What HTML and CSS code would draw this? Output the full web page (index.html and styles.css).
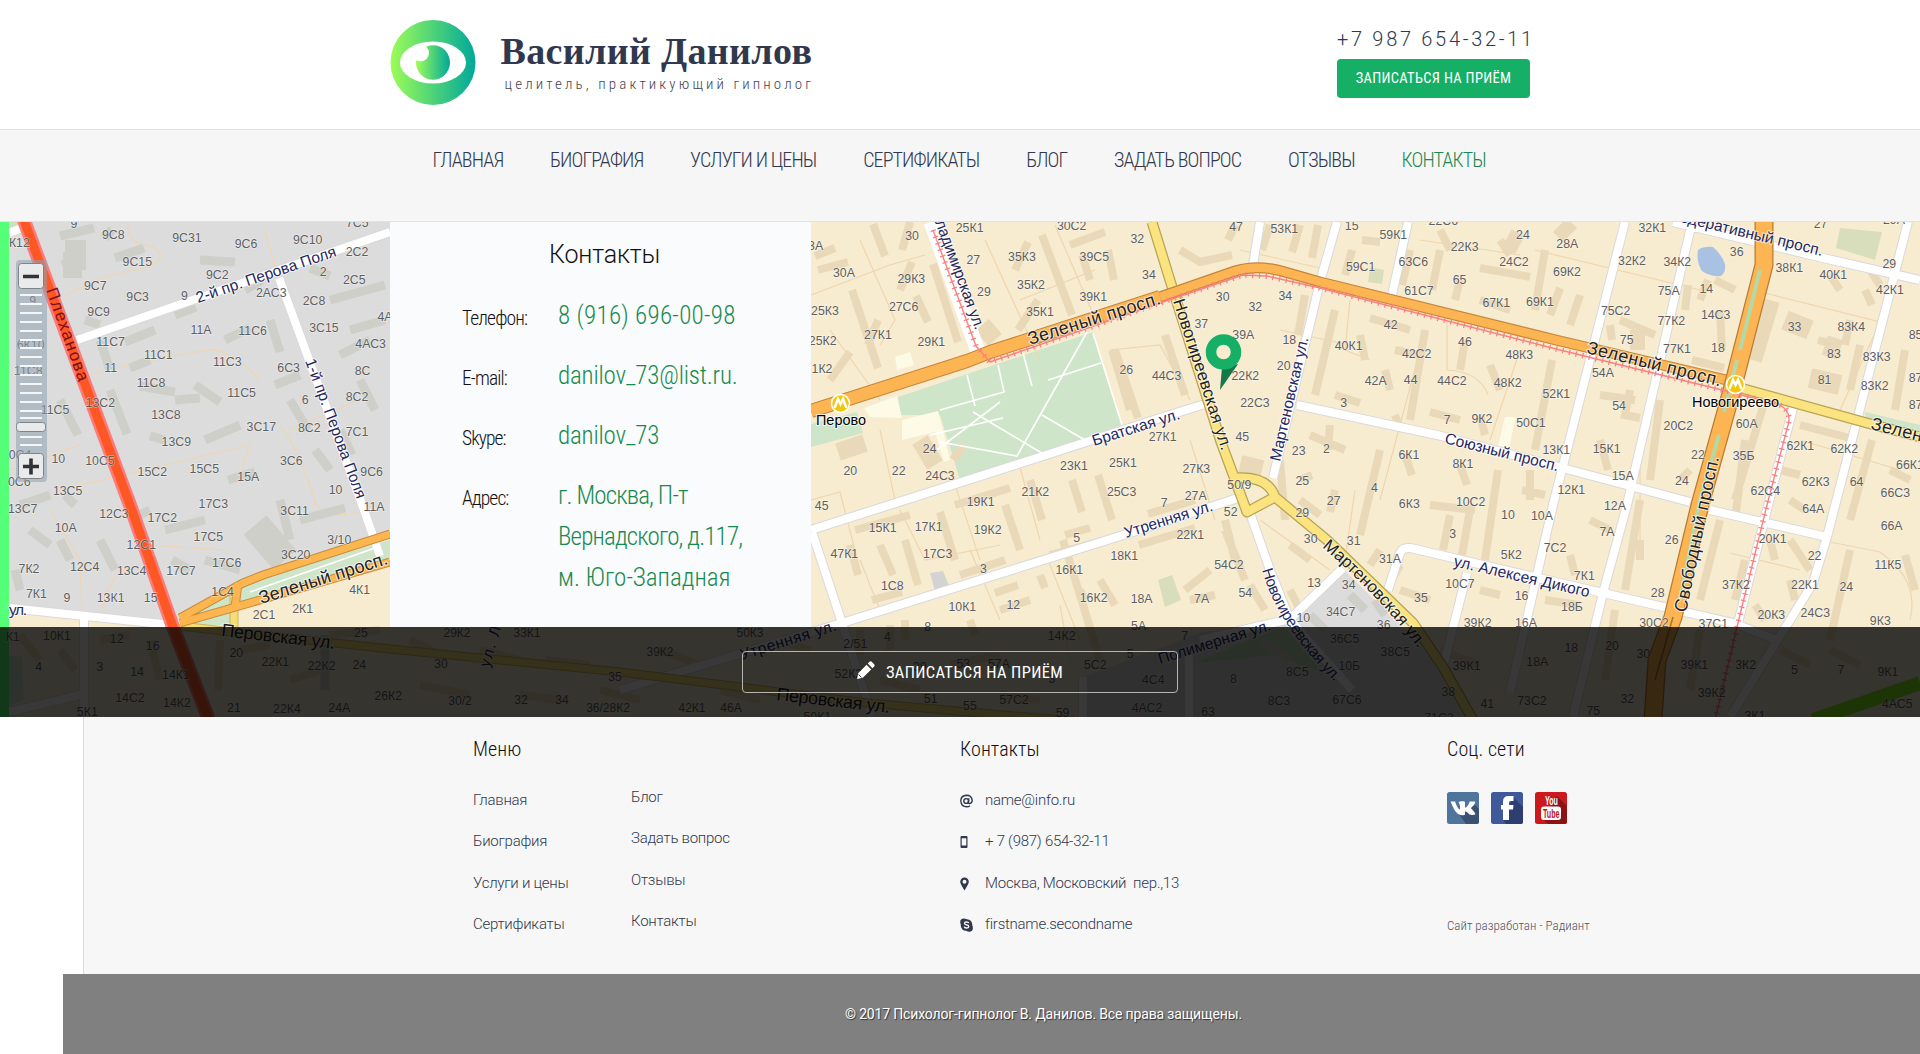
FILE: index.html
```html
<!DOCTYPE html>
<html lang="ru">
<head>
<meta charset="utf-8">
<title>Контакты — Василий Данилов</title>
<link rel="stylesheet" href="styles.css">
</head>
<body>
<header class="header">
  <div class="brand">
    <svg class="logo" viewBox="0 0 85 85">
      <defs><linearGradient id="lg" x1="0" x2="1" y1="0" y2="0"><stop offset="0" stop-color="#9dfd57"/><stop offset="1" stop-color="#00a89b"/></linearGradient></defs>
      <circle cx="42.5" cy="42.5" r="42.5" fill="url(#lg)"/>
      <ellipse cx="42.5" cy="42.5" rx="33" ry="21" fill="#fff"/>
      <ellipse cx="42.5" cy="42.5" rx="17" ry="17.3" fill="url(#lg)"/>
      <circle cx="30" cy="33" r="8.5" fill="#fff"/>
    </svg>
    <div class="names"><div class="title">Василий Данилов</div><div class="subtitle">целитель, практикующий гипнолог</div></div>
  </div>
  <div class="call"><div class="phone">+7 987 654-32-11</div><a class="book">ЗАПИСАТЬСЯ НА ПРИЁМ</a></div>
</header>
<nav class="nav">
  <a>ГЛАВНАЯ</a><a>БИОГРАФИЯ</a><a>УСЛУГИ И ЦЕНЫ</a><a>СЕРТИФИКАТЫ</a><a>БЛОГ</a><a>ЗАДАТЬ ВОПРОС</a><a>ОТЗЫВЫ</a><a class="active">КОНТАКТЫ</a>
</nav>
<section class="place">
<svg class="map" viewBox="0 222 1920 495">
  <rect x="0" y="222" width="1920" height="495" fill="#f7ecd0"/>
  <path d="M0 222H390V534L263 575L180 618L173 627L0 610Z" fill="#dcdcdc"/>
  <path d="M9 222H22L9 232Z" fill="#c9e2ba"/>
  <!-- parks, yards and water -->
  <path d="M898 397L1093 332L1122 425L960 480L940 415L900 415ZM811 424L857 412L863 433L811 447ZM180 618L240 584L390 540V558L233 605L230 625L184 625ZM1865 412L1920 425V438L1867 424ZM9 655L22 657L24 700L9 705Z" fill="#cfe5c9"/>
  <path d="M1840 228L1882 232L1875 260L1836 248ZM1158 580L1172 575L1181 600L1165 607ZM1370 267L1384 270L1382 284L1368 282Z" fill="#d8debb"/>
  <path d="M1083 717V677L1200 633L1290 620L1342 568L1443 667L1473 717Z" fill="#dcdcdc"/>
  <path d="M1195 663L1237 645L1284 627L1322 672L1275 655Z" fill="#bcdab5"/>
  <path d="M1698 250Q1704 246 1713 247Q1722 255 1725 264Q1726 273 1721 276Q1710 277 1702 271Q1696 262 1698 250Z" fill="#a9c1e2"/>
  <path d="M895 357L910 352L914 365L897 370ZM864 408L897 396L902 418L870 417ZM902 420L938 411L950 460L944 462L935 432L902 440ZM1505 417L1516 417L1509 448L1498 446Z" fill="#fdfae6"/>
  <path d="M930 573L943 571L950 588L935 591Z" fill="#d3d3d3"/>
  <!-- footpaths and lot outlines -->
  <g fill="none" stroke="#f0d5ae" stroke-width="1.2">
    <path d="M127 222C130 245 138 243 155 248C170 260 150 268 130 271S90 283 60 298M265 232L278 275M75 377L165 358Q192 352 210 350T260 380M60 490L250 445L240 475M50 510L80 560L82 612M9 470L80 445M280 425Q300 450 316 505Q330 520 360 512M290 430L370 395M150 545L225 550M100 620C105 580 125 560 140 570"/>
    <path d="M811 295L890 265L925 255M860 240L895 320L880 345M830 330L880 400M985 240L1040 360M1055 225L1100 330M1020 300L1095 270M1110 350L1160 345L1190 400M880 430L895 500M1018 460L1040 540M900 510L925 560L1000 545M950 470L980 560M1048 560L1080 640M811 500L840 492L855 550M1240 250L1320 268M1280 330L1350 345M1350 300L1345 350L1370 360M1420 350L1380 500M1447 320V370Q1480 372 1488 395M1355 490L1345 560M1520 350L1490 440M1535 250L1700 290M1765 293L1880 322L1840 410M1800 440L1900 470M1730 553L1800 570M1640 430V540M1820 540L1880 552Q1920 580 1910 620M1420 240L1520 255M1260 520L1330 570M1190 440L1215 520M970 550L1000 620M1060 605L1070 660M860 560L880 610"/>
  </g>
  <!-- buildings -->
  <g fill="none" stroke="#cfcfc9" stroke-width="9">
    <path d="M60 236L94 228M104 238L112 230M115 258L144 248M200 260L235 262M245 290L262 280M125 342L155 330M175 315L196 307M62 265L80 258M130 368L150 360M225 340L250 328M270 320L280 352M140 386L175 392M175 400L200 398M195 385L220 402M100 340L110 370M275 385L300 375M290 400L308 430M150 436L165 440M205 440L240 425M60 400L78 435M110 390L127 434M228 480L255 472M315 450L330 470M340 430L352 455M65 495L75 505M20 505L50 495M30 530L50 545M130 520L150 510M165 530L205 520M300 520L345 508M280 500L290 540M85 320L100 325M310 268L330 276M330 300L385 285M350 330L385 320M340 355L370 340M360 380L375 410M172 560L190 570M205 560L240 570M15 570L20 590M100 540L115 570M60 540L70 560"/>
    <path d="M63 265H82" stroke-width="26"/><path d="M65 255H86" stroke-width="30"/><path d="M255 525L285 560" stroke-width="30"/>
    <path d="M325 635L325 690M1260 640L1290 660M1350 595L1365 610M1375 600L1385 615M1310 615L1325 630"/>
  </g>
  <g fill="none" stroke="#e9d9b8" stroke-width="8">
    <path d="M873 224L885 256M910 222L902 250M815 256L835 248M818 270L848 262M912 262L900 290M852 290L878 368M933 264L958 342M916 296L928 322M878 320L868 345M1042 235L1072 315M1028 242L1015 270M1018 330L1038 300M1070 245L1105 232M1082 255L1090 280M1108 250L1114 280M830 380L850 352M1063 540L1100 660M1112 350L1130 410M1115 350L1138 418M1165 335L1185 395M995 472L1048 455M955 505L1010 488M855 530L910 515M940 512L955 560M1005 505L1020 550M1030 480L1042 520M1072 480L1082 512M1098 475L1112 520M960 575L1005 560M880 545L893 575M905 540L918 585M850 545L858 575M872 600L902 592M1050 555L1105 540M1065 535L1090 528M1148 514L1195 500M1139 545L1195 528M970 620L975 635M995 593L1018 585M1000 610L1030 600M1040 575L1045 588M1080 590L1085 600M1100 580L1115 605M1185 590L1210 570M1190 600L1215 595M1225 530L1245 580M1235 560L1225 520M1250 585L1265 610M1290 590L1300 610M1180 250L1200 262L1232 255M1235 225L1228 240M1270 225L1262 250M1300 225L1292 252M1318 225L1312 258M1362 240L1380 242M1352 250L1345 275M1410 250L1402 285M1440 250L1432 290M1440 230L1450 250M1480 268L1530 277M1500 240L1510 255M1545 250L1535 310M1460 280L1455 300M1480 300L1510 310M1560 288L1550 315M1580 295L1570 325M1370 318L1410 330M1335 310L1315 395M1305 295L1298 335M1335 395L1360 403M1360 335L1365 360M1395 350L1420 355M1425 330L1410 420M1385 370L1390 390M1465 340L1460 370M1490 365L1500 390M1430 412L1460 420M1480 415L1485 435M1310 435L1345 450M1330 425L1328 450M1380 450L1360 535M1405 455L1412 475M1460 465L1467 485M1395 415L1400 430M1430 505L1475 510M1450 515L1443 550M1470 510L1462 555M1498 470L1485 560M1530 470V500M1522 490L1545 495M1280 460L1285 520M1300 480L1312 475M1335 490L1330 512M1300 500L1320 515M1290 545L1310 560M1380 550L1370 565M1400 565L1392 580M1400 590L1430 600M1480 590L1500 595M1620 320L1655 335M1610 325L1612 340M1630 390L1625 415L1640 418M1600 395L1635 400M1552 360L1535 450M1600 440L1608 470M1660 400L1650 480M1715 280L1735 290M1720 310L1722 350M1692 360L1724 368M1688 285L1685 310M1700 300L1708 280M1745 440L1735 520M1765 400L1735 500M1800 425L1850 438M1860 345L1850 390M1905 350L1895 410M1870 270L1880 285M1830 275L1840 290M1818 340L1835 345M1850 320L1845 345M1865 290L1872 305M1872 440L1850 520M1890 470L1910 480M1780 470L1800 475M1790 500L1805 510M1640 500L1625 590M1720 520L1700 600M1745 560L1735 600M1770 540L1775 560M1790 540L1810 570M1790 580L1795 600M1850 550L1830 640M1905 555L1915 590M1755 605L1765 620M1545 600L1580 605M1615 610L1605 680M1700 630L1690 690M1570 555L1575 575M1590 520L1610 530M1680 480L1690 470M905 620V640M890 625V650M860 630V655M1440 650L1480 665M1780 650L1810 665M1830 650L1860 665M1640 560V540"/>
    <path d="M838 452L865 443M920 440L935 465M955 450L962 455M982 325L995 340" stroke-width="18"/>
    <path d="M1770 300L1752 360M1785 320L1810 330M1825 345L1840 350M1810 378L1840 385M1560 225L1570 235M1507 238L1520 245M1240 465L1262 470M1630 340L1645 340" stroke-width="20"/>
    <path d="M20 635L40 660M100 640L130 635M150 640L160 680M220 640L218 690M240 650L270 645M290 680L320 670M330 635L380 630M60 650L75 670M410 640L440 655M480 650L520 660M545 660L590 665M420 685L470 695M520 695L560 700M600 690L640 700M660 650L700 665M720 690L760 700M780 640L810 650M880 680L920 690M950 665L1000 655M1000 695L1040 700"/>
  </g>
  <!-- white streets -->
  <g fill="none" stroke="#d9d9dc" stroke-width="10">
    <path id="w1" d="M9 233L22 228M77 340L390 232M279 278L364 510L380 556M9 608L172 625M84 613V717M9 712L84 694"/>
    <path id="w2" d="M811 530L1043 456L1160 418L1205 404M812 532L842 623L867 700L871 717M620 690L842 623L1133 532L1238 498M1337 222L1320 282L1273 478M1260 222L1253 265M1408 222L1392 295M1297 405L1437 435L1570 470L1690 502M1710 510L1827 537M1250 513L1270 570L1290 620L1352 690M1200 640L1290 619L1343 568M1388 590L1400 553Q1403 546 1415 549L1560 583L1733 623L1777 640M1467 573L1443 667M1625 222L1553 505L1510 693M1692 222L1627 505L1603 593L1573 717M1908 222L1827 537L1813 583L1730 717M1793 408L1737 627M1673 222L1823 258L1920 280M1189 655V717M1083 677V717"/>
  </g>
  <g fill="none" stroke="#fff" stroke-width="8">
    <path d="M9 233L22 228M77 340L390 232M279 278L364 510L380 556M9 608L172 625M84 613V717M9 712L84 694"/>
    <path d="M811 530L1043 456L1160 418L1205 404M812 532L842 623L867 700L871 717M620 690L842 623L1133 532L1238 498M1337 222L1320 282L1273 478M1260 222L1253 265M1408 222L1392 295M1297 405L1437 435L1570 470L1690 502M1710 510L1827 537M1250 513L1270 570L1290 620L1352 690M1200 640L1290 619L1343 568M1388 590L1400 553Q1403 546 1415 549L1560 583L1733 623L1777 640M1467 573L1443 667M1625 222L1553 505L1510 693M1692 222L1627 505L1603 593L1573 717M1908 222L1827 537L1813 583L1730 717M1793 408L1737 627M1673 222L1823 258L1920 280M1189 655V717M1083 677V717"/>
    <path d="M931 222L979 354" stroke-width="15"/>
    <path d="M930 435L1003 418M937 450L1000 402M940 442L1017 456L1087 332M973 412L1045 455M967 375L975 406M998 365L1004 392L940 410M1023 353L1032 386M1048 380L1101 363M1042 415L1085 440M1093 333L1122 425M250 592L375 548" stroke-width="1.6"/>
  </g>
  <!-- main roads -->
  <g fill="none" stroke-linejoin="round">
    <path d="M180 626L233 632L400 650L620 672L867 703L1083 722M234 585V628" stroke="#c9b55d" stroke-width="9"/><path d="M180 626L233 632L400 650L620 672L867 703L1083 722M234 585V628" stroke="#f6dd78" stroke-width="7"/>
    <path d="M180 618L243 583L263 575L390 534M180 623L260 600L390 562M238 583L235 608" stroke="#c98c3a" stroke-width="9"/><path d="M180 618L243 583L263 575L390 534M180 623L260 600L390 562M238 583L235 608" stroke="#fdb64f" stroke-width="7"/>
    <path d="M22 215L130 505L173 627L209 720" stroke="#fb7c7c" stroke-width="14"/><path d="M22 215L130 505L173 627L209 720" stroke="#ff5724" stroke-width="9"/>
    <path d="M1152 222L1173 290L1221 442L1247 512L1275 497M1236 478Q1268 476 1275 497L1327 540L1413 623L1443 667L1473 720M1737 387L1867 423L1920 437" stroke="#b7a456" stroke-width="11"/><path d="M1152 222L1173 290L1221 442L1247 512L1275 497M1236 478Q1268 476 1275 497L1327 540L1413 623L1443 667L1473 720M1737 387L1867 423L1920 437" stroke="#fbe37f" stroke-width="8.5"/>
    <path d="M1160 297L1235 271Q1258 264 1285 272L1320 282L1560 341L1735 382" stroke="#c4863a" stroke-width="11"/><path d="M1160 297L1235 271Q1258 264 1285 272L1320 282L1560 341L1735 382" stroke="#fdb553" stroke-width="8.5"/>
    <path d="M811 411L967 361L990 352L1160 297" stroke="#c4863a" stroke-width="14"/><path d="M811 411L967 361L990 352L1160 297" stroke="#fdb553" stroke-width="12"/>
    <path d="M1764 215V265L1732 390L1700 505L1673 617L1657 660L1653 720" stroke="#b97a33" stroke-width="19"/><path d="M1764 215V265L1732 390L1700 505L1673 617L1657 660L1653 720" stroke="#fdb553" stroke-width="16.500"/>
    <path d="M1760 270L1740 350M1737 360L1724 412M1719 435L1700 500L1680 600" stroke="#b5d8a8" stroke-width="4"/><path d="M1673 617L1655 680" stroke="#a57730" stroke-width="1.5"/>
    <path d="M1813 720L1920 683" stroke="#86ef1c" stroke-width="14"/>
    <path d="M933 230L976 346L990 362L1160 303L1243 275L1267 276L1320 288L1560 350L1722 390L1780 405Q1792 412 1788 425L1767 505L1737 627L1715 720" stroke="#fb8181" stroke-width="1.4"/>
    <path d="M933 230L976 346L990 362L1160 303L1243 275L1267 276L1320 288L1560 350L1722 390L1780 405Q1792 412 1788 425L1767 505L1737 627L1715 720" stroke="#fb8181" stroke-width="5.500" stroke-dasharray="1.3 5.5"/>
  </g>
  <rect x="0" y="222" width="9" height="495" fill="#55ff78"/>
  <!-- metro stations -->
  <g fill="#f0c70b" stroke="#fff" stroke-width="1.5"><circle cx="840.5" cy="403.500" r="9"/><circle cx="1735.500" cy="384.500" r="9"/></g>
  <path id="metro" d="M834.500 408L838 399L840.500 404L843 399L846.500 408" fill="none" stroke="#fff" stroke-width="2.600"/><use href="#metro" x="895" y="-19"/>
  <g class="station"><text x="816" y="425" textLength="50" lengthAdjust="spacingAndGlyphs">Перово</text><text x="1692" y="407" textLength="87" lengthAdjust="spacingAndGlyphs">Новогиреево</text></g>
  <!-- house numbers -->
  <g class="nums">
    <g transform="translate(0 215) scale(.3333)"><text x="222" y="40">9</text><text x="340" y="71">9С8</text><text x="561" y="81">9С31</text><text x="738" y="100">9С6</text><text x="923" y="87">9С10</text><text x="1072" y="36">7С5</text><text x="58" y="96">К12</text><text x="412" y="154">9С15</text><text x="1071" y="123">2С2</text><text x="652" y="192">9С2</text><text x="970" y="183">2</text><text x="1063" y="208">2С5</text><text x="286" y="224">9С7</text><text x="413" y="257">9С3</text><text x="553" y="256">9</text><text x="814" y="247">2АС3</text><text x="942" y="270">2С8</text><text x="296" y="304">9С9</text><text x="603" y="356">11А</text><text x="758" y="361">11С6</text><text x="972" y="350">3С15</text><text x="1155" y="317">4А</text><text x="332" y="392">11С7</text><text x="1112" y="399">4АС3</text><text x="475" y="432">11С1</text><text x="682" y="452">11С3</text><text x="866" y="471">6С3</text><text x="1088" y="479">8С</text><text x="332" y="472">11</text><text x="453" y="516">11С8</text><text x="725" y="545">11С5</text><text x="916" y="567">6</text><text x="1071" y="559">8С2</text><text x="301" y="577">13С2</text><text x="165" y="597">11С5</text><text x="498" y="612">13С8</text><text x="784" y="649">3С17</text><text x="928" y="652">8С2</text><text x="1071" y="662">7С1</text><text x="529" y="694">13С9</text><text x="175" y="743">10</text><text x="300" y="751">10С5</text><text x="874" y="751">3С6</text><text x="613" y="773">15С5</text><text x="457" y="784">15С2</text><text x="745" y="798">15А</text><text x="1115" y="784">9С6</text><text x="1007" y="837">10</text><text x="203" y="841">13С5</text><text x="98" y="271">9</text><text x="92" y="401">6К10</text><text x="85" y="481">11С8</text><text x="60" y="731">0С4</text><text x="58" y="812">0С6</text></g>
    <g transform="translate(0 480) scale(.3333)"><text x="640" y="84">17С3</text><text x="884" y="104">3С11</text><text x="1122" y="92">11А</text><text x="68" y="99">13С7</text><text x="342" y="114">12С3</text><text x="487" y="127">17С2</text><text x="197" y="157">10А</text><text x="625" y="182">17С5</text><text x="1018" y="191">3/10</text><text x="424" y="206">12С1</text><text x="887" y="237">3С20</text><text x="680" y="261">17С6</text><text x="87" y="278">7К2</text><text x="254" y="273">12С4</text><text x="395" y="285">13С4</text><text x="543" y="284">17С7</text><text x="668" y="347">1С4</text><text x="109" y="355">7К1</text><text x="201" y="365">9</text><text x="332" y="366">13К1</text><text x="452" y="365">15</text><text x="1079" y="341">4К1</text><text x="908" y="398">2К1</text><text x="792" y="417">2С1</text><text x="38" y="483">К1</text><text x="171" y="481">10К1</text><text x="350" y="490">12</text><text x="458" y="509">16</text><text x="1083" y="471">25</text><text x="709" y="530">20</text><text x="116" y="574">4</text><text x="299" y="573">3</text><text x="411" y="589">14</text><text x="528" y="596">14К1</text><text x="826" y="557">22К1</text><text x="965" y="569">22К2</text><text x="1078" y="566">24</text><text x="390" y="667">14С2</text><text x="531" y="680">14К2</text><text x="702" y="696">21</text><text x="861" y="700">22К4</text><text x="1018" y="697">24А</text><text x="1165" y="660">26К2</text><text x="262" y="708">5К1</text></g>
    <g transform="translate(800 215) scale(.3333)"><text x="47" y="106">3А</text><text x="336" y="75">30</text><text x="509" y="51">25К1</text><text x="815" y="45">30С2</text><text x="1012" y="85">32</text><text x="132" y="185">30А</text><text x="520" y="147">27</text><text x="666" y="137">35К3</text><text x="883" y="137">39С5</text><text x="334" y="204">29К3</text><text x="693" y="221">35К2</text><text x="1047" y="192">34</text><text x="552" y="244">29</text><text x="880" y="259">39К1</text><text x="311" y="287">27С6</text><text x="75" y="299">25К3</text><text x="720" y="304">35К1</text><text x="234" y="371">27К1</text><text x="394" y="393">29К1</text><text x="68" y="391">25К2</text><text x="66" y="475">1К2</text><text x="979" y="477">26</text><text x="1100" y="495">44С3</text><text x="389" y="714">24</text><text x="151" y="780">20</text><text x="296" y="780">22</text><text x="420" y="795">24С3</text><text x="822" y="765">23К1</text><text x="969" y="757">25К1</text><text x="1088" y="679">27К1</text><text x="706" y="843">21К2</text><text x="965" y="843">25С3</text></g>
    <g transform="translate(1160 215) scale(.3333)"><text x="228" y="47">47</text><text x="373" y="54">53К1</text><text x="575" y="45">15</text><text x="700" y="73">59К1</text><text x="850" y="30">22С6</text><text x="1089" y="72">24</text><text x="914" y="108">22К3</text><text x="602" y="167">59С1</text><text x="760" y="154">63С6</text><text x="1062" y="154">24С2</text><text x="899" y="208">65</text><text x="188" y="258">30</text><text x="376" y="256">34</text><text x="286" y="288">32</text><text x="777" y="240">61С7</text><text x="1009" y="276">67К1</text><text x="124" y="338">37</text><text x="250" y="373">39А</text><text x="388" y="386">18</text><text x="692" y="342">42</text><text x="566" y="405">40К1</text><text x="915" y="392">46</text><text x="770" y="429">42С2</text><text x="1078" y="431">48К3</text><text x="371" y="466">20</text><text x="256" y="496">22К2</text><text x="647" y="511">42А</text><text x="752" y="508">44</text><text x="876" y="509">44С2</text><text x="1043" y="515">48К2</text><text x="285" y="575">22С3</text><text x="551" y="575">3</text><text x="862" y="627">7</text><text x="966" y="623">9К2</text><text x="1113" y="637">50С1</text><text x="247" y="678">45</text><text x="416" y="721">23</text><text x="499" y="713">2</text><text x="747" y="732">6К1</text><text x="909" y="759">8К1</text><text x="109" y="775">27К3</text><text x="427" y="810">25</text><text x="238" y="821">50/9</text><text x="643" y="832">4</text></g>
    <g transform="translate(1520 215) scale(.3333)"><text x="142" y="99">28А</text><text x="397" y="51">32К1</text><text x="902" y="38">27</text><text x="1122" y="26">29А</text><text x="650" y="122">36</text><text x="336" y="151">32К2</text><text x="472" y="152">34К2</text><text x="808" y="170">38К1</text><text x="1108" y="158">29</text><text x="940" y="191">40К1</text><text x="141" y="184">69К2</text><text x="446" y="239">75А</text><text x="559" y="233">14</text><text x="1110" y="237">42К1</text><text x="60" y="274">69К1</text><text x="287" y="300">75С2</text><text x="454" y="329">77К2</text><text x="587" y="312">14С3</text><text x="824" y="349">33</text><text x="994" y="347">83К4</text><text x="1187" y="371">85</text><text x="320" y="386">75</text><text x="471" y="414">77К1</text><text x="594" y="410">18</text><text x="942" y="428">83</text><text x="1070" y="437">83К3</text><text x="249" y="486">54А</text><text x="914" y="508">81</text><text x="1064" y="524">83К2</text><text x="1187" y="501">87</text><text x="109" y="550">52К1</text><text x="297" y="585">54</text><text x="475" y="645">20С2</text><text x="680" y="638">60А</text><text x="1187" y="583">87</text><text x="109" y="716">13К1</text><text x="260" y="713">15К1</text><text x="841" y="705">62К1</text><text x="973" y="715">62К2</text><text x="534" y="731">22</text><text x="671" y="735">35Б</text><text x="1170" y="763">66К1</text><text x="308" y="794">15А</text><text x="486" y="811">24</text><text x="887" y="813">62К3</text><text x="1010" y="813">64</text><text x="736" y="841">62С4</text><text x="1126" y="845">66С3</text><text x="154" y="837">12К1</text></g>
    <g transform="translate(800 460) scale(.3333)"><text x="65" y="151">45</text><text x="542" y="138">19К1</text><text x="1093" y="142">7</text><text x="248" y="217">15К1</text><text x="386" y="213">17К1</text><text x="563" y="222">19К2</text><text x="830" y="247">5</text><text x="133" y="295">47К1</text><text x="413" y="293">17С3</text><text x="973" y="300">18К1</text><text x="550" y="338">3</text><text x="808" y="343">16К1</text><text x="277" y="391">1С8</text><text x="881" y="426">16К2</text><text x="1025" y="429">18А</text><text x="640" y="446">12</text><text x="487" y="452">10К1</text><text x="383" y="514">8</text><text x="1016" y="511">5А</text><text x="262" y="543">4</text><text x="166" y="564">2/51</text><text x="785" y="540">14К2</text><text x="991" y="593">5</text><text x="145" y="655">52К2</text><text x="490" y="625">53</text><text x="597" y="625">57А</text><text x="886" y="626">5С2</text><text x="756" y="668">3</text><text x="1060" y="672">4С4</text><text x="392" y="728">51</text><text x="510" y="750">55</text><text x="642" y="731">57С2</text><text x="788" y="770">59</text><text x="1041" y="757">4АС2</text><text x="52" y="784">50К1</text></g>
    <g transform="translate(1160 460) scale(.3333)"><text x="107" y="119">27А</text><text x="521" y="136">27</text><text x="748" y="144">6К3</text><text x="932" y="139">10С2</text><text x="212" y="167">52</text><text x="427" y="170">29</text><text x="1044" y="178">10</text><text x="1146" y="180">10А</text><text x="91" y="238">22К1</text><text x="452" y="250">30</text><text x="581" y="255">31</text><text x="878" y="233">3</text><text x="207" y="326">54С2</text><text x="690" y="310">31А</text><text x="1054" y="297">5К2</text><text x="462" y="380">13</text><text x="566" y="388">34</text><text x="900" y="383">10С7</text><text x="256" y="412">54</text><text x="125" y="428">7А</text><text x="783" y="426">35</text><text x="1085" y="421">16</text><text x="542" y="468">34С7</text><text x="430" y="486">10</text><text x="671" y="506">36</text><text x="953" y="502">39К2</text><text x="1098" y="502">16А</text><text x="74" y="540">7</text><text x="554" y="549">36С5</text><text x="706" y="588">38С5</text><text x="568" y="631">10Б</text><text x="412" y="648">8С5</text><text x="220" y="668">8</text><text x="920" y="630">39К1</text><text x="1132" y="617">18А</text><text x="357" y="734">8С3</text><text x="561" y="733">67С6</text><text x="865" y="708">38</text><text x="982" y="743">41</text><text x="1116" y="736">73С2</text><text x="144" y="768">63</text><text x="837" y="786">71С2</text></g>
    <g transform="translate(1520 460) scale(.3333)"><text x="285" y="149">12А</text><text x="880" y="158">64А</text><text x="1115" y="209">66А</text><text x="261" y="228">7А</text><text x="455" y="252">26</text><text x="758" y="250">20К1</text><text x="105" y="277">7С2</text><text x="884" y="301">22</text><text x="1104" y="327">11К5</text><text x="193" y="361">7К1</text><text x="648" y="387">37К2</text><text x="855" y="387">22К1</text><text x="979" y="392">24</text><text x="413" y="412">28</text><text x="156" y="454">18Б</text><text x="754" y="476">20К3</text><text x="886" y="472">24С3</text><text x="1081" y="495">9К3</text><text x="402" y="502">30С2</text><text x="580" y="505">37С1</text><text x="154" y="576">18</text><text x="276" y="570">20</text><text x="370" y="595">30</text><text x="523" y="627">39К1</text><text x="677" y="627">3К2</text><text x="823" y="641">5</text><text x="963" y="642">7</text><text x="1104" y="647">9К1</text><text x="575" y="711">39К2</text><text x="322" y="730">32</text><text x="220" y="766">75</text><text x="1132" y="744">4АС5</text><text x="705" y="780">3К1</text></g>
    <g class="n1"><text x="457" y="637">29К2</text><text x="527" y="637">33К1</text><text x="750" y="637">50К3</text><text x="660" y="656">39К2</text><text x="441" y="668">30</text><text x="615" y="681">35</text><text x="460" y="705">30/2</text><text x="521" y="704">32</text><text x="562" y="704">34</text><text x="608" y="712">36/28К2</text><text x="692" y="712">42К1</text><text x="731" y="712">46А</text><text x="920" y="671">39</text></g>
  </g>
  <!-- street names -->
  <g class="streets">
    <text transform="translate(198 303) rotate(-18.700)" textLength="147">2-й пр. Перова Поля</text>
    <text transform="translate(305 361) rotate(69.500)" textLength="148">1-й пр. Перова Поля</text>
    <text transform="translate(9 615)" textLength="18">ул.</text>
    <text transform="translate(935 222) rotate(69.500)" textLength="116">ладимирская ул.</text>
    <text transform="translate(1094 446) rotate(-17.500)" textLength="91">Братская ул.</text>
    <text transform="translate(1126 538) rotate(-17.500)" textLength="92">Утренняя ул.</text>
    <text transform="translate(742 660) rotate(-17.500)" textLength="100">Утренняя ул.</text>
    <text transform="translate(1280 462) rotate(-77)" textLength="127">Мартеновская ул.</text>
    <text transform="translate(1444 443) rotate(14)" textLength="117">Союзный просп.</text>
    <text transform="translate(1668 219) rotate(13.500)" textLength="158">Федеративный просп.</text>
    <text transform="translate(1453 566) rotate(13)" textLength="139">ул. Алексея Дикого</text>
    <path id="novo" d="M1262 570Q1278 628 1345 692" fill="none"/><text textLength="135"><textPath href="#novo">Новогиреевская ул.</textPath></text>
    <text transform="translate(1160 664) rotate(-17)" textLength="117">Полимерная ул.</text>
    <text transform="translate(489 668) rotate(-73)" textLength="42">ул. Л</text>
  </g>
  <g class="avenues">
    <text transform="translate(261 604) rotate(-17.500)" textLength="134">Зеленый просп.</text>
    <text transform="translate(221 636) rotate(6.500)" textLength="114">Перовская ул.</text>
    <text transform="translate(776 700) rotate(6.500)" textLength="114">Перовская ул.</text>
    <text transform="translate(1030 345) rotate(-17.500)" textLength="138">Зеленый просп.</text>
    <text transform="translate(1586 353) rotate(14)" textLength="138">Зеленый просп.</text>
    <text transform="translate(1870 429) rotate(14)" textLength="138">Зеленый просп.</text>
    <text transform="translate(1686 613) rotate(-78)" textLength="159">Свободный просп.</text>
  </g>
  <g class="roads">
    <text transform="translate(1173 301) rotate(72)" textLength="158">Новогиреевская ул.</text>
    <path id="mart" d="M1322 547Q1378 595 1418 648" fill="none"/><text textLength="140"><textPath href="#mart">Мартеновская ул.</textPath></text>
    <text class="red" transform="translate(46 290) rotate(70.500)" textLength="98">Плеханова</text>
  </g>
  <!-- zoom slider -->
  <rect x="16" y="260" width="31" height="222" rx="4" fill="#8fa3b2" opacity=".55"/>
  <path d="M20 295H42M20 304H42M20 313H42M20 322H42M20 331H42M20 340H42M20 348H42M20 357H42M20 366H42M20 375H42M20 384H42M20 393H42M20 402H42M20 411H42M20 418H42M20 437H42M20 445H42" stroke="#f4f6f7" stroke-width="1.8"/>
  <g fill="#e9eaeb" stroke="#7e8488"><rect x="18.500" y="263.500" width="25" height="25" rx="3"/><rect x="18.500" y="453.500" width="25" height="25" rx="3"/><rect x="16.500" y="422.500" width="29" height="9" rx="3"/></g>
  <path d="M23 276.500H39M23 466.500H39M31 458.500V474.500" stroke="#333" stroke-width="3.600"/>
  <!-- office marker -->
  <path d="M1222 367L1238 364L1220 390Z" fill="#16774a"/>
  <circle cx="1223.500" cy="352" r="12.500" fill="none" stroke="#16af66" stroke-width="10.500"/>
</svg>
  <div class="card">
    <h1>Контакты</h1>
    <dl>
      <dt>Телефон:</dt><dd class="number">8 (916) 696-00-98</dd>
      <dt>E-mail:</dt><dd class="latin">danilov_73@list.ru.</dd>
      <dt>Skype:</dt><dd class="latin">danilov_73</dd>
      <dt>Адрес:</dt><dd>г. Москва, П-т<br>Вернадского, д.117,<br><span class="metro">м. Юго-Западная</span></dd>
    </dl>
  </div>
  <div class="strip"><a class="signup"><svg width="18" height="18" viewBox="0 0 18 18"><path d="M0 18L1.200 12.200L9.600 3.800L14.200 8.400L5.800 16.800ZM10.800 2.600L12.800 .6Q13.600 0 14.400 .6L17.400 3.600Q18 4.400 17.400 5.200L15.400 7.200Z" fill="#fff"/><path d="M1.500 13.500L4.500 16.500" stroke="#333" stroke-width="1"/></svg><span>ЗАПИСАТЬСЯ НА ПРИЁМ</span></a></div>
</section>
<footer class="footer">
  <div class="col">
    <h2>Меню</h2>
    <div class="links">
      <ul><li>Главная</li><li>Биография</li><li>Услуги и цены</li><li>Сертификаты</li></ul>
      <ul class="second"><li>Блог</li><li>Задать вопрос</li><li>Отзывы</li><li>Контакты</li></ul>
    </div>
  </div>
  <div class="col">
    <h2>Контакты</h2>
    <ul class="info">
      <li><svg width="13" height="14" viewBox="0 0 13 14"><g fill="none" stroke="#30384e" stroke-width="1.400"><circle cx="6.200" cy="7" r="2.400"/><path d="M8.900 4.300L8.300 8.300Q8.300 9.700 9.700 9.500Q12.300 8.800 12.200 6.300Q11.600 1.200 6.500 1.200Q.8 1.500 .8 7Q1.200 12.800 6.800 12.800Q8.800 12.700 10 11.700"/></g></svg>name@info.ru</li>
      <li><svg width="13" height="14" viewBox="0 0 13 14"><path fill="#30384e" fill-rule="evenodd" d="M1.500 1H6.500Q7.500 1 7.500 2.200V11.800Q7.500 13 6.500 13H1.500Q.5 13 .5 11.800V2.200Q.5 1 1.500 1ZM1.700 3.200V10.500H6.300V3.200Z"/></svg>+ 7 (987) 654-32-11</li>
      <li><svg width="13" height="14" viewBox="0 0 13 14"><path fill="#30384e" fill-rule="evenodd" d="M4.500 .5A4.300 4.300 0 0 1 8.800 4.800C8.800 7 6.500 10 4.500 13.500C2.500 10 .2 7 .2 4.800A4.300 4.300 0 0 1 4.500 .5ZM4.500 2.800A2 2 0 1 0 4.500 6.800A2 2 0 1 0 4.500 2.800Z"/></svg><span class="addr">Москва, Московский&nbsp; пер.,13</span></li>
      <li><svg width="13" height="14" viewBox="0 0 13 14"><rect x=".8" y="1.300" width="11.400" height="11.400" rx="5.200" fill="#30384e"/><circle cx="3.800" cy="4" r="3.600" fill="#30384e"/><circle cx="9.200" cy="10" r="3.700" fill="#30384e"/><path d="M8.800 5.100Q8.400 3.900 6.500 3.900Q4.400 4 4.400 5.400Q4.500 6.500 6.600 6.900Q8.900 7.300 8.800 8.600Q8.600 10 6.500 10Q4.400 9.900 4.200 8.600" fill="none" stroke="#fff" stroke-width="1.300"/></svg>firstname.secondname</li>
    </ul>
  </div>
  <div class="col">
    <h2>Соц. сети</h2>
    <div class="social">
      <svg width="32" height="32" viewBox="0 0 32 32"><rect width="32" height="32" rx="2.500" fill="#4f759c"/><path d="M28 13L32 17V29.500Q32 32 29.500 32H19L12 22Z" fill="#38526f"/><path fill="#fff" d="M3.500 9.500H8.200C9 12.500 10.700 16.500 12.600 17.600C13.500 17.500 13.200 11.500 11.500 10.500C12 9.200 17.500 8.800 18 10V15.500C19.200 16.500 22 12 22.700 9.500H28C29 10.800 26.500 13.500 23.800 16.300C25.500 17.700 28.500 20.800 28.300 22.600C26.500 23.200 23.500 23 22.500 22.500C21.300 21 19.500 19.400 18 19.200V22.700C13 24.500 9.500 21.500 7.200 17.500Z"/></svg>
      <svg width="32" height="32" viewBox="0 0 32 32"><rect width="32" height="32" rx="2.500" fill="#40599b"/><path d="M22 5L32 15V29.500Q32 32 29.500 32H15L12.500 28Z" fill="#2c3f70"/><path fill="#fff" d="M12 28V17.500H10V13H12V9.500Q12 4 17.500 4H22.500V9H19.500Q18 9 18 10.500V13H22.500L22 17.500H18V28Z"/></svg>
      <svg width="32" height="32" viewBox="0 0 32 32"><rect width="32" height="32" rx="2.500" fill="#cb1a1d"/><path d="M22 4L32 14V29.500Q32 32 29.500 32H13L8 27Z" fill="#8e1113"/><rect x="6" y="14.500" width="20" height="13.500" rx="3" fill="#fff"/><g class="yt"><text x="10" y="12.500" textLength="13" lengthAdjust="spacingAndGlyphs" fill="#fff">You</text><text x="8" y="26" textLength="16.500" lengthAdjust="spacingAndGlyphs" fill="#b5171a">Tube</text></g></svg>
    </div>
    <p class="credit">Сайт разработан - Радиант</p>
  </div>
</footer>
<div class="copyright">© 2017 Психолог-гипнолог В. Данилов. Все права защищены.</div>
</body>
</html>
```
FILE: styles.css
```css
* { box-sizing: border-box; }
body { margin: 0; background: #fff; color: #30384e; font-family: Roboto, "Open Sans", sans-serif; font-weight: 300; }
h1, h2, ul, dl, dd, p { margin: 0; padding: 0; font-weight: 300; }
ul { list-style: none; }
svg { display: block; }

.header { height: 129px; padding: 20px 388px 0 390px; display: flex; justify-content: space-between; align-items: flex-start; }
.brand { display: flex; gap: 24.5px; }
.logo { width: 86px; height: 85px; }
.names { padding-top: 11px; }
.title { font: bold 38px/40px "Liberation Serif", serif; letter-spacing: 0.35px; white-space: nowrap; }
.subtitle { padding: 3px 0 0 4px; font-size: 15px; line-height: 20px; font-stretch: 75%; letter-spacing: 3.12px; white-space: nowrap; color: #3f4554; }
.call { width: 195px; padding-top: 5px; }
.phone { font-size: 20px; line-height: 28px; letter-spacing: 2.7px; white-space: nowrap; }
.book { display: block; width: 193px; height: 39px; margin-top: 6px; border-radius: 4px; background: #16af66; color: #fff; font-size: 14.5px; line-height: 39px; font-stretch: 75%; letter-spacing: .3px; font-weight: 400; text-align: center; white-space: nowrap; }

.nav { height: 93px; padding: 16px 0 0 432.5px; background: #f6f6f6; border: solid #e2e2e2; border-width: 1px 0; display: flex; gap: 46.7px; font-size: 20px; line-height: 28px; font-stretch: 75%; letter-spacing: -.87px; white-space: nowrap; }
.active { color: #188a4f; }

.place { position: relative; height: 495px; padding-left: 390px; display: flex; flex-direction: column; }
.map { position: absolute; inset: 0; width: 1920px; height: 495px; }
.card { position: relative; width: 421px; height: 405px; padding: 18px 0 0 72px; background: #fafbfd; }
.card h1 { margin: 0 0 25px 87px; color: #111; font-size: 25px; line-height: 30px; letter-spacing: -.15px; }
.card dl { display: grid; grid-template-columns: 96px 1fr; row-gap: 19px; font-stretch: 75%; }
.card dt { padding-top: 6px; color: #111; font-size: 19.5px; line-height: 35px; letter-spacing: -.9px; }
.card dd { color: #188a4f; font-size: 25px; line-height: 41px; letter-spacing: -.85px; white-space: nowrap; }
.card .latin { letter-spacing: -.2px; }
.card .number { letter-spacing: .3px; }
.card .metro { letter-spacing: 0; }
.strip { position: relative; height: 90px; margin-left: -390px; padding-top: 24px; background: rgba(0, 0, 0, .78); display: flex; justify-content: center; align-items: flex-start; }
.signup { width: 436px; height: 42px; border: 1px solid #b5b5b2; border-radius: 4px; display: flex; justify-content: center; align-items: center; gap: 11px; color: #fff; font-size: 16.5px; font-weight: 400; font-stretch: 75%; letter-spacing: .35px; white-space: nowrap; }
.signup svg { margin-top: -4px; }

.nums text { font: 37px "Liberation Sans", sans-serif; fill: #5e5e60; text-anchor: middle; paint-order: stroke; stroke: rgba(255, 255, 255, .45); stroke-width: 4px; }
.nums .n1 text { font-size: 12px; stroke-width: 1px; }
.streets text, .avenues text, .roads text, .station text { font: 15.5px "Liberation Sans", sans-serif; fill: #26265e; paint-order: stroke; stroke: rgba(255, 255, 255, .7); stroke-width: 2px; }
.avenues text { font-size: 18px; fill: #222; }
.roads text { font-size: 17px; fill: #222; }
.roads .red { fill: #7c1018; stroke: none; }
.station text { font-size: 14px; fill: #000; }

.footer { height: 257px; margin-left: 83px; padding: 18px 0 0 389px; border-left: 1px solid #dcdcdc; background: #f7f7f7; display: grid; grid-template-columns: 487px 487px 1fr; }
.footer h2 { margin-bottom: 17px; color: #111; font-size: 20px; line-height: 28px; font-stretch: 75%; letter-spacing: .1px; }
.footer li { height: 41.3px; font-size: 15px; line-height: 41px; letter-spacing: -.25px; white-space: nowrap; }
.links { display: flex; }
.links ul { width: 158px; }
.links .second { margin-top: -3px; }
.info li { display: flex; align-items: center; gap: 12px; }
.info svg { margin-top: 1px; }
.social { display: flex; gap: 12px; padding-top: 12px; }
.yt text { font: bold 12px "Liberation Sans", sans-serif; }
.credit { padding-top: 92px; color: #4e5262; font-size: 13px; line-height: 20px; font-stretch: 75%; }
.copyright { height: 80px; margin-left: 63px; padding: 1px 0 0 782px; background: #808080; color: #fff; font: 400 14px/78px Roboto, sans-serif; letter-spacing: -.16px; text-shadow: 1px 1px 1px #333; }
```
